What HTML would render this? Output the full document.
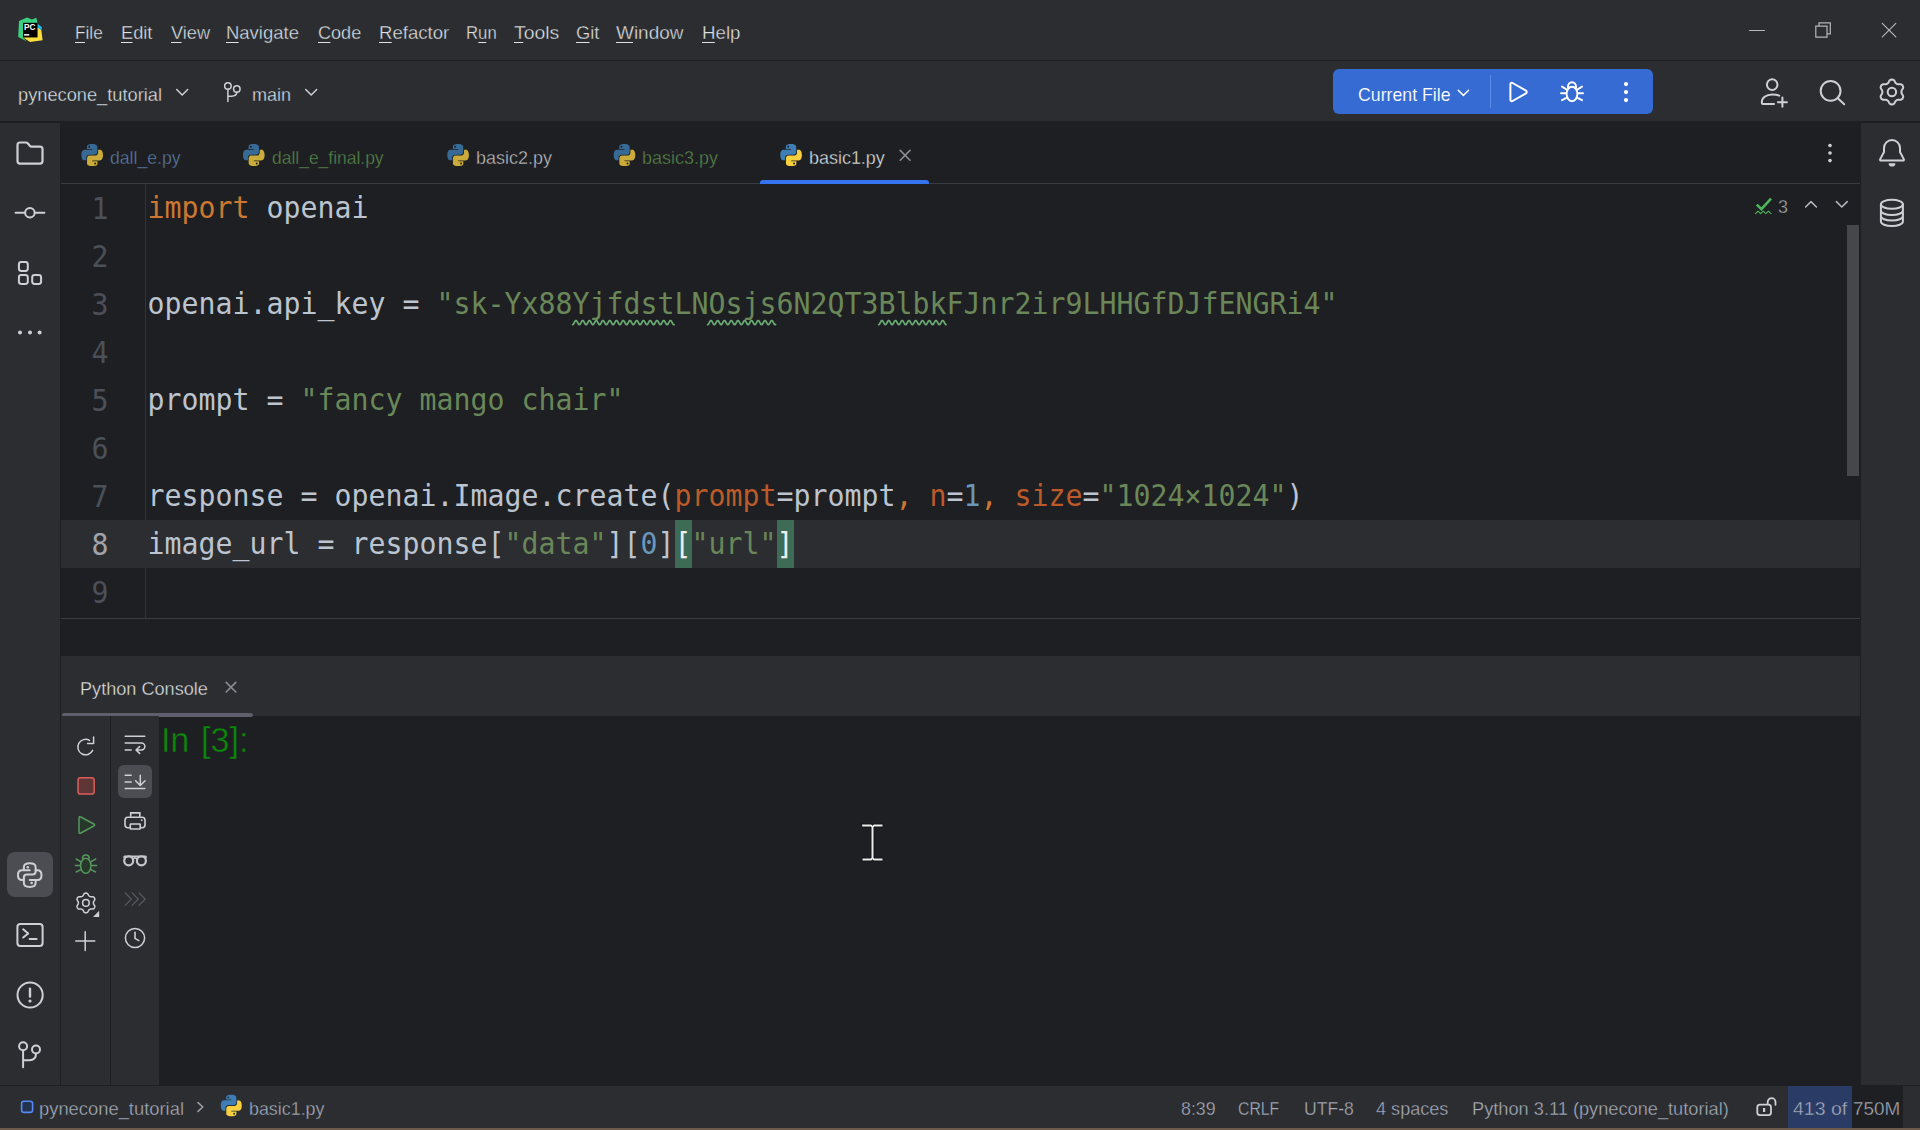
<!DOCTYPE html>
<html lang="en"><head><meta charset="utf-8"><title>pynecone_tutorial – basic1.py</title>
<style>
html,body{margin:0;padding:0;background:#1e1f22;}
body{width:1920px;height:1130px;overflow:hidden;position:relative;font-family:"Liberation Sans", sans-serif;}
#app{position:absolute;left:0;top:0;width:1920px;height:1130px;overflow:hidden;background:#1e1f22;}
#app>div,#app>svg,#app>span{position:absolute;}
.t{white-space:pre;transform-origin:0 0;}
.c{font-family:"DejaVu Sans Mono", "Liberation Mono", monospace;font-size:28.24px;line-height:44px;letter-spacing:0;transform:scaleY(1.085);transform-origin:0 31px;}
u{text-decoration:none;background:linear-gradient(currentColor,currentColor) no-repeat 0 19.6px/calc(100% - 1px) 1.6px;}
</style></head>
<body><div id="app">
<div style="left:0px;top:0px;width:1920px;height:60px;background:#2b2d30;"></div>
<div style="left:0px;top:60px;width:1920px;height:1px;background:#1e1f22;"></div>
<div style="left:0px;top:61px;width:1920px;height:60px;background:#2b2d30;"></div>
<div style="left:0px;top:121px;width:1920px;height:2px;background:#1e1f22;"></div>
<div style="left:0px;top:123px;width:60px;height:962px;background:#2b2d30;"></div>
<div style="left:1861px;top:123px;width:59px;height:962px;background:#2b2d30;"></div>
<div style="left:60px;top:123px;width:1px;height:962px;background:#1e1f22;"></div>
<div style="left:1860px;top:123px;width:1px;height:962px;background:#1e1f22;"></div>
<div style="left:61px;top:183px;width:1799px;height:1px;background:#393b40;"></div>
<div style="left:145px;top:184px;width:1px;height:434px;background:#313438;"></div>
<div style="left:61px;top:520px;width:1799px;height:48px;background:#2b2d30;"></div>
<div style="left:675px;top:520px;width:17px;height:48px;background:#3d6b55;"></div>
<div style="left:776.8px;top:520px;width:17.2px;height:48px;background:#3d6b55;"></div>
<div style="left:61px;top:618px;width:1799px;height:1px;background:#393b40;"></div>
<div style="left:61px;top:656px;width:1799px;height:60px;background:#2b2d30;"></div>
<div style="left:61.6px;top:713px;width:191.6px;height:3.8px;background:#5d606c;border-radius:2px"></div>
<div style="left:61px;top:716px;width:49px;height:369px;background:#2b2d30;"></div>
<div style="left:110px;top:716px;width:1px;height:369px;background:#1e1f22;"></div>
<div style="left:111px;top:716px;width:48px;height:369px;background:#2b2d30;"></div>
<div style="left:0px;top:1085px;width:1920px;height:1px;background:#1e1f22;"></div>
<div style="left:0px;top:1086px;width:1920px;height:42px;background:#2b2d30;"></div>
<div style="left:0px;top:1128px;width:1920px;height:2px;background:#6e5a4b;"></div>
<div style="left:1788px;top:1086px;width:115px;height:42px;background:#1e1f22;"></div>
<div style="left:1788px;top:1086px;width:64px;height:42px;background:#2a3c66;"></div>
<div style="left:1847px;top:225px;width:12px;height:251px;background:#45474b;"></div>
<div style="left:760px;top:180px;width:169px;height:4px;background:#3574f0;border-radius:3px 3px 0 0"></div>
<div style="left:1333px;top:69px;width:320px;height:45px;background:#356bd2;border-radius:6px"></div>
<div style="left:1490px;top:75px;width:1px;height:33px;background:#5d8ae6;"></div>
<div style="left:7px;top:852px;width:46px;height:45.4px;background:#4b4d53;border-radius:8px"></div>
<div style="left:118px;top:764.8px;width:34px;height:33.3px;background:#4b4d53;border-radius:6px"></div>
<span class="t c" style="left:91.50px;top:187.6px;color:#4b5059">1</span>
<span class="t c" style="left:91.50px;top:235.6px;color:#4b5059">2</span>
<span class="t c" style="left:91.50px;top:283.6px;color:#4b5059">3</span>
<span class="t c" style="left:91.50px;top:331.6px;color:#4b5059">4</span>
<span class="t c" style="left:91.50px;top:379.6px;color:#4b5059">5</span>
<span class="t c" style="left:91.50px;top:427.6px;color:#4b5059">6</span>
<span class="t c" style="left:91.50px;top:475.6px;color:#4b5059">7</span>
<span class="t c" style="left:91.50px;top:523.6px;color:#a1a3ab">8</span>
<span class="t c" style="left:91.50px;top:571.6px;color:#4b5059">9</span>
<span class="t c" style="left:147.60px;top:187.00px;color:#cc7832">import</span>
<span class="t c" style="left:266.60px;top:187.00px;color:#bcc4cf">openai</span>
<span class="t c" style="left:147.60px;top:283.00px;color:#bcc4cf">openai.api_key =</span>
<span class="t c" style="left:436.60px;top:283.00px;color:#6a8759">&quot;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&quot;</span>
<span class="t c" style="left:147.60px;top:379.00px;color:#bcc4cf">prompt =</span>
<span class="t c" style="left:300.60px;top:379.00px;color:#6a8759">&quot;fancy mango chair&quot;</span>
<span class="t c" style="left:147.60px;top:475.00px;color:#bcc4cf">response = openai.Image.create(</span>
<span class="t c" style="left:674.60px;top:475.00px;color:#bd5a2a">prompt</span>
<span class="t c" style="left:776.60px;top:475.00px;color:#bcc4cf">=prompt</span>
<span class="t c" style="left:895.60px;top:475.00px;color:#cc7832">,</span>
<span class="t c" style="left:929.60px;top:475.00px;color:#bd5a2a">n</span>
<span class="t c" style="left:946.60px;top:475.00px;color:#bcc4cf">=</span>
<span class="t c" style="left:963.60px;top:475.00px;color:#6897bb">1</span>
<span class="t c" style="left:980.60px;top:475.00px;color:#cc7832">,</span>
<span class="t c" style="left:1014.60px;top:475.00px;color:#bd5a2a">size</span>
<span class="t c" style="left:1082.60px;top:475.00px;color:#bcc4cf">=</span>
<span class="t c" style="left:1099.60px;top:475.00px;color:#6a8759">&quot;1024×1024&quot;</span>
<span class="t c" style="left:1286.60px;top:475.00px;color:#bcc4cf">)</span>
<span class="t c" style="left:147.60px;top:523.00px;color:#bcc4cf">image_url = response[</span>
<span class="t c" style="left:504.60px;top:523.00px;color:#6a8759">&quot;data&quot;</span>
<span class="t c" style="left:606.60px;top:523.00px;color:#bcc4cf">][</span>
<span class="t c" style="left:640.60px;top:523.00px;color:#6897bb">0</span>
<span class="t c" style="left:657.60px;top:523.00px;color:#bcc4cf">]</span>
<span class="t c" style="left:674.60px;top:523.00px;color:#eceef2">[</span>
<span class="t c" style="left:691.60px;top:523.00px;color:#6a8759">&quot;url&quot;</span>
<span class="t c" style="left:776.60px;top:523.00px;color:#eceef2">]</span>
<svg style="left:0;top:0" width="1920" height="1130" viewBox="0 0 1920 1130" fill="none" stroke-linecap="round" stroke-linejoin="round"><polygon points="19,21 27,17.6 32,19.6 36.3,17.8 37.6,23 23,23 23,37.5 26.5,41.2 18.2,37" fill="#3bd07f" stroke="none"/><polygon points="37.3,23.5 42,27.2 41.2,31 37.3,29.5" fill="#20b8e8" stroke="none"/><polygon points="37.3,27.5 41.4,30.5 42.6,40.2 30,42 25.5,39 23,37.3 37.3,37.3" fill="#fbdd3d" stroke="none"/><rect x="23" y="22.8" width="14.4" height="14.5" fill="#000" stroke="none"/><rect x="24.1" y="34.1" width="5.2" height="1.5" fill="#fff" stroke="none"/><path d="M1749.5 30.5H1764.5" stroke="#b4b6bb" stroke-width="1.2" fill="none" /><path d="M1815.8 26.2H1827V37.2H1815.8Z M1819 26V22.9H1830.3V33.8H1827.2" stroke="#b4b6bb" stroke-width="1.2" fill="none" stroke-linejoin="miter"/><path d="M1882.3 23.3L1895.8 36.8M1895.8 23.3L1882.3 36.8" stroke="#b4b6bb" stroke-width="1.2" fill="none" /><path d="M176.7 89.5L182.2 95L187.7 89.5" stroke="#ced0d6" stroke-width="1.5" fill="none" /><path d="M305.7 89.5L311.2 95L316.7 89.5" stroke="#ced0d6" stroke-width="1.5" fill="none" /><circle cx="227.9" cy="85.9" r="3.25" stroke="#ced0d6" stroke-width="1.5" fill="none"/><circle cx="236.8" cy="89" r="3.25" stroke="#ced0d6" stroke-width="1.5" fill="none"/><path d="M227.9 89.3V101.6 M236.8 92.3C236.8 95.5 234.5 96.2 231.5 96.2H228" stroke="#ced0d6" stroke-width="1.5" fill="none" /><path d="M1458.2 90.2L1463.4 95.4L1468.6 90.2" stroke="#fff" stroke-width="1.5" fill="none" /><path d="M1510.4 84.2V99.8C1510.4 101 1511.6 101.6 1512.6 101L1526 93.3C1527 92.7 1527 91.3 1526 90.7L1512.6 83C1511.6 82.4 1510.4 83 1510.4 84.2Z" stroke="#fff" stroke-width="2" fill="none" /><ellipse cx="1572" cy="94" rx="5.4" ry="7.2" stroke="#fff" stroke-width="1.9" fill="none"/><path d="M1567.9 87.2C1567.9 84.4 1569.6 82.3 1572 82.3C1574.4 82.3 1576.1 84.4 1576.1 87.2" stroke="#fff" stroke-width="1.9" fill="none" /><path d="M1561 93.3H1566.3M1577.7 93.3H1583 M1562 86.6L1566.8 89.6M1582 86.6L1577.2 89.6 M1562 100.2L1566.9 97.6M1582 100.2L1577.1 97.6" stroke="#fff" stroke-width="1.9" fill="none" /><circle cx="1626" cy="84.1" r="2.1" fill="#fff" stroke="none"/><circle cx="1626" cy="92.1" r="2.1" fill="#fff" stroke="none"/><circle cx="1626" cy="100.1" r="2.1" fill="#fff" stroke="none"/><circle cx="1772.2" cy="84.6" r="5.3" stroke="#ced0d6" stroke-width="2" fill="none"/><path d="M1779.2 95.6C1777.5 94.8 1775 94.4 1772.2 94.4C1765.8 94.4 1761.8 98 1761.8 102.2C1761.8 103.4 1762.6 104.1 1763.8 104.1H1774" stroke="#ced0d6" stroke-width="2" fill="none" /><path d="M1777.9 102.2H1786.9M1782.4 97.6V106.8" stroke="#ced0d6" stroke-width="2" fill="none" /><circle cx="1830.6" cy="90.9" r="9.9" stroke="#ced0d6" stroke-width="2" fill="none"/><path d="M1837.8 98.2L1844.2 104.2" stroke="#ced0d6" stroke-width="2" fill="none" /><path d="M1901.40 92.00 L1901.49 91.16 L1901.76 90.26 L1902.53 89.15 L1903.17 87.90 L1903.12 86.77 L1902.73 85.75 L1902.04 84.90 L1901.08 84.29 L1899.68 84.22 L1898.33 84.33 L1897.42 84.12 L1896.65 83.77 L1895.97 83.28 L1895.32 82.59 L1894.75 81.37 L1893.98 80.19 L1892.98 79.67 L1891.90 79.50 L1890.82 79.67 L1889.82 80.19 L1889.05 81.37 L1888.48 82.59 L1887.83 83.28 L1887.15 83.77 L1886.38 84.12 L1885.47 84.33 L1884.12 84.22 L1882.72 84.29 L1881.76 84.90 L1881.07 85.75 L1880.68 86.77 L1880.63 87.90 L1881.27 89.15 L1882.04 90.26 L1882.31 91.16 L1882.40 92.00 L1882.31 92.84 L1882.04 93.74 L1881.27 94.85 L1880.63 96.10 L1880.68 97.23 L1881.07 98.25 L1881.76 99.10 L1882.72 99.71 L1884.12 99.78 L1885.47 99.67 L1886.38 99.88 L1887.15 100.23 L1887.83 100.72 L1888.48 101.41 L1889.05 102.63 L1889.82 103.81 L1890.82 104.33 L1891.90 104.50 L1892.98 104.33 L1893.98 103.81 L1894.75 102.63 L1895.32 101.41 L1895.97 100.72 L1896.65 100.23 L1897.42 99.88 L1898.33 99.67 L1899.68 99.78 L1901.08 99.71 L1902.04 99.10 L1902.73 98.25 L1903.12 97.23 L1903.17 96.10 L1902.53 94.85 L1901.76 93.74 L1901.49 92.84Z" stroke="#ced0d6" stroke-width="2" fill="none" /><circle cx="1891.9" cy="92" r="4.2" stroke="#ced0d6" stroke-width="2" fill="none"/><path d="M17.5 145Q17.5 142.5 20 142.5H26Q26.9 142.5 27.5 143.1L30 145.9Q30.6 146.6 31.5 146.6H40Q42.5 146.6 42.5 149.1V161.1Q42.5 163.6 40 163.6H20Q17.5 163.6 17.5 161.1Z" stroke="#ced0d6" stroke-width="2.2" fill="none" /><path d="M15.6 212.8H24.6M35.2 212.8H44.4" stroke="#ced0d6" stroke-width="2" fill="none" /><circle cx="29.9" cy="212.8" r="4.75" stroke="#ced0d6" stroke-width="2" fill="none"/><rect x="18.9" y="262" width="8.9" height="8.9" rx="2.4" stroke="#ced0d6" stroke-width="2" fill="none"/><rect x="18.9" y="275" width="8.9" height="8.9" rx="2.4" stroke="#ced0d6" stroke-width="2" fill="none"/><rect x="32.2" y="275" width="8.9" height="8.9" rx="2.4" stroke="#ced0d6" stroke-width="2" fill="none"/><circle cx="20" cy="332.5" r="2" fill="#ced0d6" stroke="none"/><circle cx="30" cy="332.5" r="2" fill="#ced0d6" stroke="none"/><circle cx="39.6" cy="332.5" r="2" fill="#ced0d6" stroke="none"/><g transform="translate(16.9 862.3) scale(1.07)"><path d="M12 7.5H6.5V4.6C6.5 2.4 8.6 1 12 1C15.4 1 17.5 2.4 17.5 4.6V8.6C17.5 10.2 16.4 11.4 14.8 11.4H9.3C7.6 11.4 6.5 12.6 6.5 14.2V16.5H4.8C2.5 16.5 1 14.8 1 12C1 9.2 2.5 7.5 4.8 7.5H6.5" stroke="#ced0d6" stroke-width="1.8691588785046729" fill="none"/><path d="M12 16.5H17.5V19.4C17.5 21.6 15.4 23 12 23C8.6 23 6.5 21.6 6.5 19.4V15.4 M17.5 7.5H19.2C21.5 7.5 23 9.2 23 12C23 14.8 21.5 16.5 19.2 16.5H17.5" stroke="#ced0d6" stroke-width="1.8691588785046729" fill="none"/><circle cx="10.2" cy="4.6" r="1.2" fill="#ced0d6"/><circle cx="13.8" cy="19.4" r="1.2" fill="#ced0d6"/></g><rect x="17.4" y="924" width="25.2" height="22" rx="3" stroke="#ced0d6" stroke-width="2" fill="none"/><path d="M23.2 929.3L28.2 933.4L23.2 937.5M29.6 939.1H36.6" stroke="#ced0d6" stroke-width="2" fill="none" /><circle cx="30.1" cy="995" r="12.6" stroke="#ced0d6" stroke-width="2" fill="none"/><path d="M30 988.8V996.6" stroke="#ced0d6" stroke-width="2.4" fill="none" /><circle cx="30" cy="1001" r="1.6" fill="#ced0d6" stroke="none"/><circle cx="23.1" cy="1046.3" r="4" stroke="#ced0d6" stroke-width="2" fill="none"/><circle cx="36" cy="1049.5" r="4" stroke="#ced0d6" stroke-width="2" fill="none"/><path d="M23.1 1050.5V1067.2M36 1053.6C36 1058 33.5 1060.3 29.5 1060.3H23.3" stroke="#ced0d6" stroke-width="2" fill="none" /><g transform="translate(79.86 142.53) scale(1.5429 1.5714)" opacity="0.8" stroke="none"><path d="M7.93 1C4.39 1 4.61 2.53 4.61 2.53v1.59h3.38v.48H3.27S1 4.34 1 7.9c0 3.56 1.98 3.43 1.98 3.43h1.18V9.68s-.06-1.98 1.95-1.98h3.35s1.88.03 1.88-1.82V2.83S11.63 1 7.93 1zM6.07 2.07a.61.61 0 110 1.22.61.61 0 010-1.22z" fill="#3f7db6"/><path d="M8.07 15c3.54 0 3.32-1.53 3.32-1.53v-1.59H8.01v-.48h4.72S15 11.66 15 8.1c0-3.56-1.98-3.43-1.98-3.43h-1.18v1.65s.06 1.98-1.95 1.98H6.54s-1.88-.03-1.88 1.82v3.05S4.37 15 8.07 15zm1.86-1.07a.61.61 0 110-1.22.61.61 0 010 1.22z" fill="#f7cf3f"/></g><g transform="translate(241.46 142.53) scale(1.5429 1.5714)" opacity="0.8" stroke="none"><path d="M7.93 1C4.39 1 4.61 2.53 4.61 2.53v1.59h3.38v.48H3.27S1 4.34 1 7.9c0 3.56 1.98 3.43 1.98 3.43h1.18V9.68s-.06-1.98 1.95-1.98h3.35s1.88.03 1.88-1.82V2.83S11.63 1 7.93 1zM6.07 2.07a.61.61 0 110 1.22.61.61 0 010-1.22z" fill="#3f7db6"/><path d="M8.07 15c3.54 0 3.32-1.53 3.32-1.53v-1.59H8.01v-.48h4.72S15 11.66 15 8.1c0-3.56-1.98-3.43-1.98-3.43h-1.18v1.65s.06 1.98-1.95 1.98H6.54s-1.88-.03-1.88 1.82v3.05S4.37 15 8.07 15zm1.86-1.07a.61.61 0 110-1.22.61.61 0 010 1.22z" fill="#f7cf3f"/></g><g transform="translate(445.76 142.53) scale(1.5429 1.5714)" opacity="0.8" stroke="none"><path d="M7.93 1C4.39 1 4.61 2.53 4.61 2.53v1.59h3.38v.48H3.27S1 4.34 1 7.9c0 3.56 1.98 3.43 1.98 3.43h1.18V9.68s-.06-1.98 1.95-1.98h3.35s1.88.03 1.88-1.82V2.83S11.63 1 7.93 1zM6.07 2.07a.61.61 0 110 1.22.61.61 0 010-1.22z" fill="#3f7db6"/><path d="M8.07 15c3.54 0 3.32-1.53 3.32-1.53v-1.59H8.01v-.48h4.72S15 11.66 15 8.1c0-3.56-1.98-3.43-1.98-3.43h-1.18v1.65s.06 1.98-1.95 1.98H6.54s-1.88-.03-1.88 1.82v3.05S4.37 15 8.07 15zm1.86-1.07a.61.61 0 110-1.22.61.61 0 010 1.22z" fill="#f7cf3f"/></g><g transform="translate(612.16 142.53) scale(1.5429 1.5714)" opacity="0.8" stroke="none"><path d="M7.93 1C4.39 1 4.61 2.53 4.61 2.53v1.59h3.38v.48H3.27S1 4.34 1 7.9c0 3.56 1.98 3.43 1.98 3.43h1.18V9.68s-.06-1.98 1.95-1.98h3.35s1.88.03 1.88-1.82V2.83S11.63 1 7.93 1zM6.07 2.07a.61.61 0 110 1.22.61.61 0 010-1.22z" fill="#3f7db6"/><path d="M8.07 15c3.54 0 3.32-1.53 3.32-1.53v-1.59H8.01v-.48h4.72S15 11.66 15 8.1c0-3.56-1.98-3.43-1.98-3.43h-1.18v1.65s.06 1.98-1.95 1.98H6.54s-1.88-.03-1.88 1.82v3.05S4.37 15 8.07 15zm1.86-1.07a.61.61 0 110-1.22.61.61 0 010 1.22z" fill="#f7cf3f"/></g><g transform="translate(778.76 142.53) scale(1.5429 1.5714)" opacity="1.0" stroke="none"><path d="M7.93 1C4.39 1 4.61 2.53 4.61 2.53v1.59h3.38v.48H3.27S1 4.34 1 7.9c0 3.56 1.98 3.43 1.98 3.43h1.18V9.68s-.06-1.98 1.95-1.98h3.35s1.88.03 1.88-1.82V2.83S11.63 1 7.93 1zM6.07 2.07a.61.61 0 110 1.22.61.61 0 010-1.22z" fill="#3f7db6"/><path d="M8.07 15c3.54 0 3.32-1.53 3.32-1.53v-1.59H8.01v-.48h4.72S15 11.66 15 8.1c0-3.56-1.98-3.43-1.98-3.43h-1.18v1.65s.06 1.98-1.95 1.98H6.54s-1.88-.03-1.88 1.82v3.05S4.37 15 8.07 15zm1.86-1.07a.61.61 0 110-1.22.61.61 0 010 1.22z" fill="#f7cf3f"/></g><g transform="translate(219.30 1093.26) scale(1.5000 1.5357)" opacity="1.0" stroke="none"><path d="M7.93 1C4.39 1 4.61 2.53 4.61 2.53v1.59h3.38v.48H3.27S1 4.34 1 7.9c0 3.56 1.98 3.43 1.98 3.43h1.18V9.68s-.06-1.98 1.95-1.98h3.35s1.88.03 1.88-1.82V2.83S11.63 1 7.93 1zM6.07 2.07a.61.61 0 110 1.22.61.61 0 010-1.22z" fill="#3f7db6"/><path d="M8.07 15c3.54 0 3.32-1.53 3.32-1.53v-1.59H8.01v-.48h4.72S15 11.66 15 8.1c0-3.56-1.98-3.43-1.98-3.43h-1.18v1.65s.06 1.98-1.95 1.98H6.54s-1.88-.03-1.88 1.82v3.05S4.37 15 8.07 15zm1.86-1.07a.61.61 0 110-1.22.61.61 0 010 1.22z" fill="#f7cf3f"/></g><path d="M900.2 150.4L910 160.2M910 150.4L900.2 160.2" stroke="#8a8d94" stroke-width="1.6" fill="none" /><path d="M1884 152V148A8 8 0 0 1 1900 148V152L1903.8 159.1Q1904.3 160.5 1903 160.5H1881Q1879.7 160.5 1880.2 159.1Z" stroke="#ced0d6" stroke-width="2" fill="none" /><path d="M1888.6 163.2H1895.4A3.4 3.4 0 0 1 1888.6 163.2Z" fill="#ced0d6" stroke="none"/><ellipse cx="1891.9" cy="204.3" rx="11" ry="4.5" stroke="#ced0d6" stroke-width="2" fill="none"/><path d="M1880.9 204.3V221.6M1902.9 204.3V221.6 M1880.9 210.6A11 4.5 0 0 0 1902.9 210.6 M1880.9 216.1A11 4.5 0 0 0 1902.9 216.1 M1880.9 221.6A11 4.5 0 0 0 1902.9 221.6" stroke="#ced0d6" stroke-width="2" fill="none" /><circle cx="1830" cy="145.5" r="1.8" fill="#ced0d6" stroke="none"/><circle cx="1830" cy="153" r="1.8" fill="#ced0d6" stroke="none"/><circle cx="1830" cy="160.6" r="1.8" fill="#ced0d6" stroke="none"/><path d="M1756.8 204.6L1761.4 209.2L1771 198.6" stroke="#4cb85c" stroke-width="2.6" fill="none" stroke-linecap="butt" stroke-linejoin="miter"/><path d="M1755.5 213.6L1758 211.2L1760.6 213.6L1763.2 211.2L1765.8 213.6L1768.4 211.2L1771 213.6" stroke="#4cb85c" stroke-width="1.1" fill="none" /><path d="M1805.6 207L1811 201.6L1816.4 207" stroke="#b4b8bf" stroke-width="1.5" fill="none" /><path d="M1836.4 201.6L1841.8 207L1847.2 201.6" stroke="#b4b8bf" stroke-width="1.5" fill="none" /><path d="M572.6 324.70 L573.1 324.48 L573.6 323.85 L574.1 322.96 L574.6 322.00 L575.1 321.16 L575.6 320.63 L576.1 320.51 L576.6 320.85 L577.1 321.55 L577.6 322.48 L578.1 323.43 L578.6 324.21 L579.1 324.64 L579.6 324.64 L580.1 324.21 L580.6 323.43 L581.1 322.48 L581.6 321.55 L582.1 320.85 L582.6 320.51 L583.1 320.63 L583.6 321.16 L584.1 322.00 L584.6 322.96 L585.1 323.85 L585.6 324.48 L586.1 324.70 L586.6 324.48 L587.1 323.85 L587.6 322.96 L588.1 322.00 L588.6 321.16 L589.1 320.63 L589.6 320.51 L590.1 320.85 L590.6 321.55 L591.1 322.48 L591.6 323.43 L592.1 324.21 L592.6 324.64 L593.1 324.64 L593.6 324.21 L594.1 323.43 L594.6 322.48 L595.1 321.55 L595.6 320.85 L596.1 320.51 L596.6 320.63 L597.1 321.16 L597.6 322.00 L598.1 322.96 L598.6 323.85 L599.1 324.48 L599.6 324.70 L600.1 324.48 L600.6 323.85 L601.1 322.96 L601.6 322.00 L602.1 321.16 L602.6 320.63 L603.1 320.51 L603.6 320.85 L604.1 321.55 L604.6 322.48 L605.1 323.43 L605.6 324.21 L606.1 324.64 L606.6 324.64 L607.1 324.21 L607.6 323.43 L608.1 322.48 L608.6 321.55 L609.1 320.85 L609.6 320.51 L610.1 320.63 L610.6 321.16 L611.1 322.00 L611.6 322.96 L612.1 323.85 L612.6 324.48 L613.1 324.70 L613.6 324.48 L614.1 323.85 L614.6 322.96 L615.1 322.00 L615.6 321.16 L616.1 320.63 L616.6 320.51 L617.1 320.85 L617.6 321.55 L618.1 322.48 L618.6 323.43 L619.1 324.21 L619.6 324.64 L620.1 324.64 L620.6 324.21 L621.1 323.43 L621.6 322.48 L622.1 321.55 L622.6 320.85 L623.1 320.51 L623.6 320.63 L624.1 321.16 L624.6 322.00 L625.1 322.96 L625.6 323.85 L626.1 324.48 L626.6 324.70 L627.1 324.48 L627.6 323.85 L628.1 322.96 L628.6 322.00 L629.1 321.16 L629.6 320.63 L630.1 320.51 L630.6 320.85 L631.1 321.55 L631.6 322.48 L632.1 323.43 L632.6 324.21 L633.1 324.64 L633.6 324.64 L634.1 324.21 L634.6 323.43 L635.1 322.48 L635.6 321.55 L636.1 320.85 L636.6 320.51 L637.1 320.63 L637.6 321.16 L638.1 322.00 L638.6 322.96 L639.1 323.85 L639.6 324.48 L640.1 324.70 L640.6 324.48 L641.1 323.85 L641.6 322.96 L642.1 322.00 L642.6 321.16 L643.1 320.63 L643.6 320.51 L644.1 320.85 L644.6 321.55 L645.1 322.48 L645.6 323.43 L646.1 324.21 L646.6 324.64 L647.1 324.64 L647.6 324.21 L648.1 323.43 L648.6 322.48 L649.1 321.55 L649.6 320.85 L650.1 320.51 L650.6 320.63 L651.1 321.16 L651.6 322.00 L652.1 322.96 L652.6 323.85 L653.1 324.48 L653.6 324.70 L654.1 324.48 L654.6 323.85 L655.1 322.96 L655.6 322.00 L656.1 321.16 L656.6 320.63 L657.1 320.51 L657.6 320.85 L658.1 321.55 L658.6 322.48 L659.1 323.43 L659.6 324.21 L660.1 324.64 L660.6 324.64 L661.1 324.21 L661.6 323.43 L662.1 322.48 L662.6 321.55 L663.1 320.85 L663.6 320.51 L664.1 320.63 L664.6 321.16 L665.1 322.00 L665.6 322.96 L666.1 323.85 L666.6 324.48 L667.1 324.70 L667.6 324.48 L668.1 323.85 L668.6 322.96 L669.1 322.00 L669.6 321.16 L670.1 320.63 L670.6 320.51 L671.1 320.85 L671.6 321.55 L672.1 322.48 L672.6 323.43 L673.1 324.21 L673.6 324.64 L674.1 324.64" stroke="#6aab73" stroke-width="1.7" fill="none" /><path d="M707.6 324.70 L708.1 324.48 L708.6 323.85 L709.1 322.96 L709.6 322.00 L710.1 321.16 L710.6 320.63 L711.1 320.51 L711.6 320.85 L712.1 321.55 L712.6 322.48 L713.1 323.43 L713.6 324.21 L714.1 324.64 L714.6 324.64 L715.1 324.21 L715.6 323.43 L716.1 322.48 L716.6 321.55 L717.1 320.85 L717.6 320.51 L718.1 320.63 L718.6 321.16 L719.1 322.00 L719.6 322.96 L720.1 323.85 L720.6 324.48 L721.1 324.70 L721.6 324.48 L722.1 323.85 L722.6 322.96 L723.1 322.00 L723.6 321.16 L724.1 320.63 L724.6 320.51 L725.1 320.85 L725.6 321.55 L726.1 322.48 L726.6 323.43 L727.1 324.21 L727.6 324.64 L728.1 324.64 L728.6 324.21 L729.1 323.43 L729.6 322.48 L730.1 321.55 L730.6 320.85 L731.1 320.51 L731.6 320.63 L732.1 321.16 L732.6 322.00 L733.1 322.96 L733.6 323.85 L734.1 324.48 L734.6 324.70 L735.1 324.48 L735.6 323.85 L736.1 322.96 L736.6 322.00 L737.1 321.16 L737.6 320.63 L738.1 320.51 L738.6 320.85 L739.1 321.55 L739.6 322.48 L740.1 323.43 L740.6 324.21 L741.1 324.64 L741.6 324.64 L742.1 324.21 L742.6 323.43 L743.1 322.48 L743.6 321.55 L744.1 320.85 L744.6 320.51 L745.1 320.63 L745.6 321.16 L746.1 322.00 L746.6 322.96 L747.1 323.85 L747.6 324.48 L748.1 324.70 L748.6 324.48 L749.1 323.85 L749.6 322.96 L750.1 322.00 L750.6 321.16 L751.1 320.63 L751.6 320.51 L752.1 320.85 L752.6 321.55 L753.1 322.48 L753.6 323.43 L754.1 324.21 L754.6 324.64 L755.1 324.64 L755.6 324.21 L756.1 323.43 L756.6 322.48 L757.1 321.55 L757.6 320.85 L758.1 320.51 L758.6 320.63 L759.1 321.16 L759.6 322.00 L760.1 322.96 L760.6 323.85 L761.1 324.48 L761.6 324.70 L762.1 324.48 L762.6 323.85 L763.1 322.96 L763.6 322.00 L764.1 321.16 L764.6 320.63 L765.1 320.51 L765.6 320.85 L766.1 321.55 L766.6 322.48 L767.1 323.43 L767.6 324.21 L768.1 324.64 L768.6 324.64 L769.1 324.21 L769.6 323.43 L770.1 322.48 L770.6 321.55 L771.1 320.85 L771.6 320.51 L772.1 320.63 L772.6 321.16 L773.1 322.00 L773.6 322.96 L774.1 323.85 L774.6 324.48 L775.1 324.70 L775.6 324.48" stroke="#6aab73" stroke-width="1.7" fill="none" /><path d="M878.6 324.70 L879.1 324.48 L879.6 323.85 L880.1 322.96 L880.6 322.00 L881.1 321.16 L881.6 320.63 L882.1 320.51 L882.6 320.85 L883.1 321.55 L883.6 322.48 L884.1 323.43 L884.6 324.21 L885.1 324.64 L885.6 324.64 L886.1 324.21 L886.6 323.43 L887.1 322.48 L887.6 321.55 L888.1 320.85 L888.6 320.51 L889.1 320.63 L889.6 321.16 L890.1 322.00 L890.6 322.96 L891.1 323.85 L891.6 324.48 L892.1 324.70 L892.6 324.48 L893.1 323.85 L893.6 322.96 L894.1 322.00 L894.6 321.16 L895.1 320.63 L895.6 320.51 L896.1 320.85 L896.6 321.55 L897.1 322.48 L897.6 323.43 L898.1 324.21 L898.6 324.64 L899.1 324.64 L899.6 324.21 L900.1 323.43 L900.6 322.48 L901.1 321.55 L901.6 320.85 L902.1 320.51 L902.6 320.63 L903.1 321.16 L903.6 322.00 L904.1 322.96 L904.6 323.85 L905.1 324.48 L905.6 324.70 L906.1 324.48 L906.6 323.85 L907.1 322.96 L907.6 322.00 L908.1 321.16 L908.6 320.63 L909.1 320.51 L909.6 320.85 L910.1 321.55 L910.6 322.48 L911.1 323.43 L911.6 324.21 L912.1 324.64 L912.6 324.64 L913.1 324.21 L913.6 323.43 L914.1 322.48 L914.6 321.55 L915.1 320.85 L915.6 320.51 L916.1 320.63 L916.6 321.16 L917.1 322.00 L917.6 322.96 L918.1 323.85 L918.6 324.48 L919.1 324.70 L919.6 324.48 L920.1 323.85 L920.6 322.96 L921.1 322.00 L921.6 321.16 L922.1 320.63 L922.6 320.51 L923.1 320.85 L923.6 321.55 L924.1 322.48 L924.6 323.43 L925.1 324.21 L925.6 324.64 L926.1 324.64 L926.6 324.21 L927.1 323.43 L927.6 322.48 L928.1 321.55 L928.6 320.85 L929.1 320.51 L929.6 320.63 L930.1 321.16 L930.6 322.00 L931.1 322.96 L931.6 323.85 L932.1 324.48 L932.6 324.70 L933.1 324.48 L933.6 323.85 L934.1 322.96 L934.6 322.00 L935.1 321.16 L935.6 320.63 L936.1 320.51 L936.6 320.85 L937.1 321.55 L937.6 322.48 L938.1 323.43 L938.6 324.21 L939.1 324.64 L939.6 324.64 L940.1 324.21 L940.6 323.43 L941.1 322.48 L941.6 321.55 L942.1 320.85 L942.6 320.51 L943.1 320.63 L943.6 321.16 L944.1 322.00 L944.6 322.96 L945.1 323.85 L945.6 324.48 L946.1 324.70" stroke="#6aab73" stroke-width="1.7" fill="none" /><path d="M89.5 740.4A7.75 7.75 0 1 0 92.6 750.4 M93.6 736.9V743.6H87.6" stroke="#ced0d6" stroke-width="1.5" fill="none" /><rect x="78" y="777.8" width="16.2" height="16.2" rx="2.6" stroke="#db5c5c" stroke-width="1.5" fill="#5e3636"/><path d="M79 818V832Q79 834 80.8 833L93.8 826Q95.5 825 93.8 824L80.8 817Q79 816 79 818Z" stroke="#57965c" stroke-width="1.5" fill="#25382a" /><ellipse cx="85.8" cy="865.8" rx="5.2" ry="7.5" stroke="#57965c" stroke-width="1.5" fill="#25382a"/><path d="M82.6 858.6C82.6 856.4 84 854.9 85.9 854.9C87.8 854.9 89.2 856.4 89.2 858.6" stroke="#57965c" stroke-width="1.5" fill="none" /><path d="M75.4 865.5H80M91.6 865.5H96.6 M76.2 859L80.6 861.7M95.6 859L91.2 861.7 M76.2 872L80.8 869.6M95.6 872L91 869.6" stroke="#57965c" stroke-width="1.5" fill="none" /><path d="M93.40 902.90 L93.47 902.24 L93.69 901.53 L94.30 900.65 L94.82 899.65 L94.78 898.76 L94.47 897.95 L93.93 897.28 L93.17 896.80 L92.05 896.75 L90.98 896.84 L90.26 896.68 L89.65 896.40 L89.11 896.01 L88.60 895.47 L88.15 894.50 L87.55 893.55 L86.75 893.14 L85.90 893.00 L85.05 893.14 L84.25 893.55 L83.65 894.50 L83.20 895.47 L82.69 896.01 L82.15 896.40 L81.54 896.68 L80.82 896.84 L79.75 896.75 L78.63 896.80 L77.87 897.28 L77.33 897.95 L77.02 898.76 L76.98 899.65 L77.50 900.65 L78.11 901.53 L78.33 902.24 L78.40 902.90 L78.33 903.56 L78.11 904.27 L77.50 905.15 L76.98 906.15 L77.02 907.04 L77.33 907.85 L77.87 908.52 L78.63 909.00 L79.75 909.05 L80.82 908.96 L81.54 909.12 L82.15 909.40 L82.69 909.79 L83.20 910.33 L83.65 911.30 L84.25 912.25 L85.05 912.66 L85.90 912.80 L86.75 912.66 L87.55 912.25 L88.15 911.30 L88.60 910.33 L89.11 909.79 L89.65 909.40 L90.26 909.12 L90.98 908.96 L92.05 909.05 L93.17 909.00 L93.93 908.52 L94.47 907.85 L94.78 907.04 L94.82 906.15 L94.30 905.15 L93.69 904.27 L93.47 903.56Z" stroke="#ced0d6" stroke-width="1.5" fill="none" /><circle cx="85.9" cy="902.9" r="3.3" stroke="#ced0d6" stroke-width="1.5" fill="none"/><path d="M99.2 910.8V917H93Z" fill="#ced0d6" stroke="none"/><path d="M75.8 941.1H94.8M85.2 931.8V950.6" stroke="#ced0d6" stroke-width="1.5" fill="none" /><path d="M125.2 736.2H144.8 M125.2 743.1H141.4A3.45 3.45 0 0 1 141.4 750H136.4 M139.6 746.6L136 750L139.6 753.4 M125.2 750H131.2" stroke="#ced0d6" stroke-width="1.5" fill="none" /><path d="M125.2 775.3H131.2M125.2 782.1H131.2M125.2 788.6H144.8 M140.3 775.2V785.2M135.6 780.8L140.3 785.5L145 780.8" stroke="#ced0d6" stroke-width="1.5" fill="none" /><rect x="125" y="817.2" width="20" height="10.6" rx="3" stroke="#ced0d6" stroke-width="1.6" fill="none"/><path d="M130.7 816.8V812.9H139.8V816.8" stroke="#ced0d6" stroke-width="1.6" fill="none" stroke-linejoin="miter" stroke-linecap="butt"/><rect x="130.3" y="824" width="9.9" height="5" rx="0.5" stroke="#ced0d6" stroke-width="1.6" fill="#2b2d30"/><circle cx="141.7" cy="820.2" r="0.9" fill="#ced0d6" stroke="none"/><circle cx="128.7" cy="860.8" r="4.5" stroke="#c4c6cc" stroke-width="2.2" fill="none"/><circle cx="141.4" cy="860.8" r="4.5" stroke="#c4c6cc" stroke-width="2.2" fill="none"/><path d="M124 857.2L124.6 856.2H145.6L146.2 857.2 M133.3 858.6Q135 857.2 136.8 858.6" stroke="#c4c6cc" stroke-width="1.6" fill="none" /><path d="M125.2 892.8L131.4 899.1L125.2 905.4" stroke="#5a5d63" stroke-width="1.2" fill="none" /><path d="M132.1 892.8L138.3 899.1L132.1 905.4" stroke="#5a5d63" stroke-width="1.2" fill="none" /><path d="M139.0 892.8L145.2 899.1L139.0 905.4" stroke="#5a5d63" stroke-width="1.2" fill="none" /><circle cx="135" cy="938" r="9.6" stroke="#ced0d6" stroke-width="1.5" fill="none"/><path d="M135 932.2V938.4L138.8 940.6" stroke="#ced0d6" stroke-width="1.6" fill="none" /><path d="M226.2 682.4L235.8 692M235.8 682.4L226.2 692" stroke="#8a8d94" stroke-width="1.6" fill="none" /><rect x="21.6" y="1101.2" width="11" height="11.2" rx="2.4" stroke="#548af7" stroke-width="1.6" fill="#25324d"/><path d="M198 1102.6L202.8 1107L198 1111.4" stroke="#9da0a8" stroke-width="1.5" fill="none" /><rect x="1757.3" y="1104.7" width="13.7" height="10.5" rx="2.6" stroke="#ced0d6" stroke-width="1.8" fill="none"/><path d="M1767.7 1104.2V1102.1A3.9 3.9 0 0 1 1775.5 1102.1V1104.8" stroke="#ced0d6" stroke-width="1.8" fill="none" /><rect x="1763" y="1108" width="2.2" height="4" fill="#ced0d6" stroke="none"/><path d="M862 824H871.2L872.5 825.2L873.8 824H883V827H874V858H883V861H873.8L872.5 859.8L871.2 861H862V858H871V827H862Z" fill="#ececec" stroke="#141517" stroke-width="1" stroke-linejoin="miter"/></svg>
<span class="t" style="left:74.60px;top:20.00px;font-size:19px;line-height:25px;transform:scaleX(0.9045);color:#dfe1e5;-webkit-text-stroke:0.35px #2b2d30;"><u>F</u>ile</span>
<span class="t" style="left:121.10px;top:20.00px;font-size:19px;line-height:25px;transform:scaleX(0.9588);color:#dfe1e5;-webkit-text-stroke:0.35px #2b2d30;"><u>E</u>dit</span>
<span class="t" style="left:170.50px;top:20.00px;font-size:19px;line-height:25px;transform:scaleX(0.9573);color:#dfe1e5;-webkit-text-stroke:0.35px #2b2d30;"><u>V</u>iew</span>
<span class="t" style="left:226.20px;top:20.00px;font-size:19px;line-height:25px;transform:scaleX(0.9720);color:#dfe1e5;-webkit-text-stroke:0.35px #2b2d30;"><u>N</u>avigate</span>
<span class="t" style="left:318.00px;top:20.00px;font-size:19px;line-height:25px;transform:scaleX(0.9511);color:#dfe1e5;-webkit-text-stroke:0.35px #2b2d30;"><u>C</u>ode</span>
<span class="t" style="left:379.00px;top:20.00px;font-size:19px;line-height:25px;transform:scaleX(0.9789);color:#dfe1e5;-webkit-text-stroke:0.35px #2b2d30;"><u>R</u>efactor</span>
<span class="t" style="left:465.50px;top:20.00px;font-size:19px;line-height:25px;transform:scaleX(0.8807);color:#dfe1e5;-webkit-text-stroke:0.35px #2b2d30;">R<u>u</u>n</span>
<span class="t" style="left:513.80px;top:20.00px;font-size:19px;line-height:25px;transform:scaleX(1.0212);color:#dfe1e5;-webkit-text-stroke:0.35px #2b2d30;"><u>T</u>ools</span>
<span class="t" style="left:575.90px;top:20.00px;font-size:19px;line-height:25px;transform:scaleX(0.9637);color:#dfe1e5;-webkit-text-stroke:0.35px #2b2d30;"><u>G</u>it</span>
<span class="t" style="left:615.90px;top:20.00px;font-size:19px;line-height:25px;transform:scaleX(0.9974);color:#dfe1e5;-webkit-text-stroke:0.35px #2b2d30;"><u>W</u>indow</span>
<span class="t" style="left:701.90px;top:20.00px;font-size:19px;line-height:25px;transform:scaleX(0.9852);color:#dfe1e5;-webkit-text-stroke:0.35px #2b2d30;"><u>H</u>elp</span>
<span class="t" style="left:18.10px;top:82.00px;font-size:19px;line-height:25px;transform:scaleX(0.9600);color:#dfe1e5;-webkit-text-stroke:0.35px #2b2d30;">pynecone_tutorial</span>
<span class="t" style="left:251.90px;top:82.00px;font-size:19px;line-height:25px;transform:scaleX(0.9493);color:#dfe1e5;-webkit-text-stroke:0.35px #2b2d30;">main</span>
<span class="t" style="left:1357.70px;top:82.00px;font-size:19px;line-height:25px;transform:scaleX(0.9320);color:#ffffff;-webkit-text-stroke:0.15px #356bd2;">Current File</span>
<span class="t" style="left:110.00px;top:145.00px;font-size:19px;line-height:25px;transform:scaleX(0.9282);color:#5a7aa3;-webkit-text-stroke:0.35px #1e1f22;">dall_e.py</span>
<span class="t" style="left:272.20px;top:145.00px;font-size:19px;line-height:25px;transform:scaleX(0.9186);color:#56854a;-webkit-text-stroke:0.35px #1e1f22;">dall_e_final.py</span>
<span class="t" style="left:476.40px;top:145.00px;font-size:19px;line-height:25px;transform:scaleX(0.9454);color:#bcbec4;-webkit-text-stroke:0.35px #1e1f22;">basic2.py</span>
<span class="t" style="left:642.20px;top:145.00px;font-size:19px;line-height:25px;transform:scaleX(0.9454);color:#56854a;-webkit-text-stroke:0.35px #1e1f22;">basic3.py</span>
<span class="t" style="left:809.00px;top:145.00px;font-size:19px;line-height:25px;transform:scaleX(0.9442);color:#dfe1e5;-webkit-text-stroke:0.35px #1e1f22;">basic1.py</span>
<span class="t" style="left:1778.00px;top:194.30px;font-size:19px;line-height:25px;transform:scaleX(0.9453);color:#a4a7ae;-webkit-text-stroke:0.35px #1e1f22;">3</span>
<span class="t" style="left:79.90px;top:676.00px;font-size:19px;line-height:25px;transform:scaleX(0.9534);color:#dfe1e5;-webkit-text-stroke:0.35px #2b2d30;">Python Console</span>
<span class="t" style="left:161.00px;top:718.10px;font-size:34.5px;line-height:45px;transform:scaleX(0.9798);color:#0a8a0a;-webkit-text-stroke:0.5px #1e1f22;">In</span>
<span class="t" style="left:200.70px;top:718.10px;font-size:34.5px;line-height:45px;transform:scaleX(0.9906);color:#0a8a0a;-webkit-text-stroke:0.5px #1e1f22;">[3]:</span>
<span class="t" style="left:38.80px;top:1096.00px;font-size:19px;line-height:25px;transform:scaleX(0.9667);color:#a8adbd;-webkit-text-stroke:0.35px #2b2d30;">pynecone_tutorial</span>
<span class="t" style="left:248.80px;top:1096.00px;font-size:19px;line-height:25px;transform:scaleX(0.9404);color:#a8adbd;-webkit-text-stroke:0.35px #2b2d30;">basic1.py</span>
<span class="t" style="left:1180.70px;top:1096.00px;font-size:19px;line-height:25px;transform:scaleX(0.9382);color:#a8adbd;-webkit-text-stroke:0.35px #2b2d30;">8:39</span>
<span class="t" style="left:1238.40px;top:1096.00px;font-size:19px;line-height:25px;transform:scaleX(0.8302);color:#a8adbd;-webkit-text-stroke:0.35px #2b2d30;">CRLF</span>
<span class="t" style="left:1303.60px;top:1096.00px;font-size:19px;line-height:25px;transform:scaleX(0.9270);color:#a8adbd;-webkit-text-stroke:0.35px #2b2d30;">UTF-8</span>
<span class="t" style="left:1375.90px;top:1096.00px;font-size:19px;line-height:25px;transform:scaleX(0.9520);color:#a8adbd;-webkit-text-stroke:0.35px #2b2d30;">4 spaces</span>
<span class="t" style="left:1471.70px;top:1096.00px;font-size:19px;line-height:25px;transform:scaleX(0.9584);color:#a8adbd;-webkit-text-stroke:0.35px #2b2d30;">Python 3.11 (pynecone_tutorial)</span>
<span class="t" style="left:1793.20px;top:1096.00px;font-size:19px;line-height:25px;transform:scaleX(1.0279);color:#a8adbd;-webkit-text-stroke:0.35px #2a3c66;">413 of</span>
<span class="t" style="left:1852.50px;top:1096.00px;font-size:19px;line-height:25px;transform:scaleX(0.9951);color:#a8adbd;-webkit-text-stroke:0.35px #1e1f22;">750M</span>
<span class="t" style="left:23.90px;top:21.80px;font-size:8.6px;line-height:11px;transform:scaleX(0.9621);color:#ffffff;font-weight:bold;">PC</span>
</div></body></html>
